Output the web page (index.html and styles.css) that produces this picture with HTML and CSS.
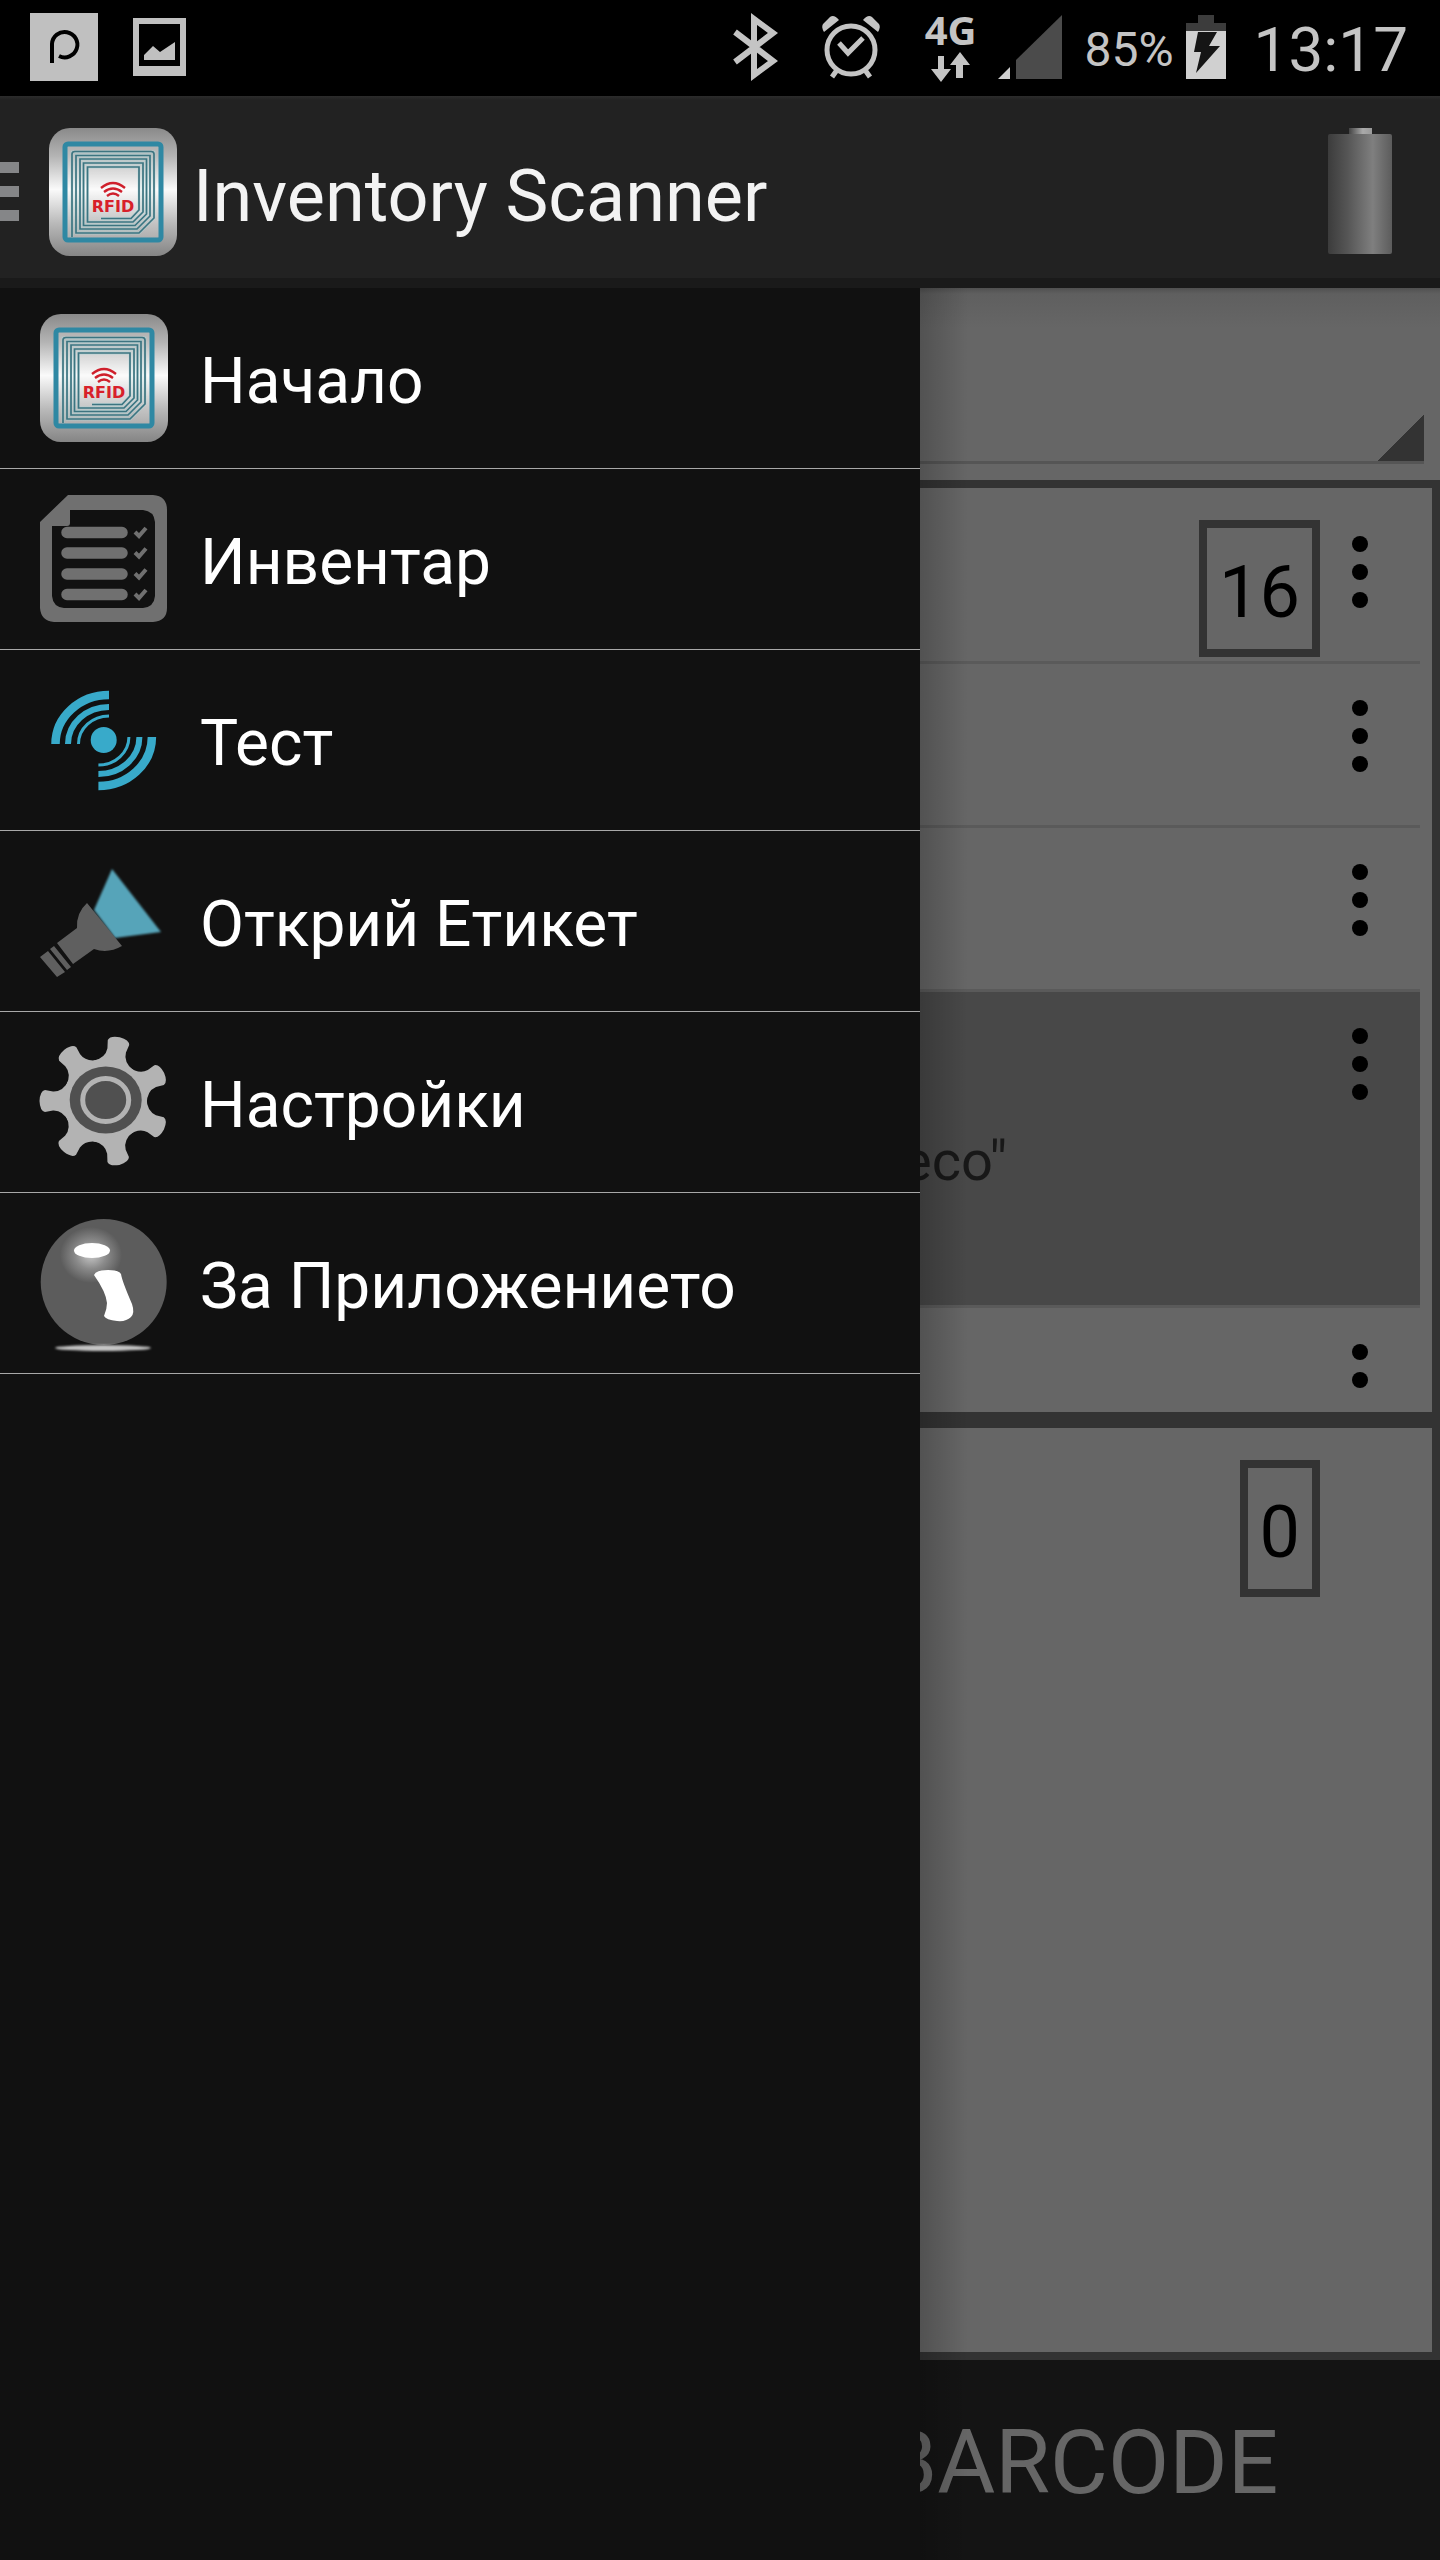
FILE: index.html
```html
<!DOCTYPE html>
<html lang="bg">
<head>
    <meta charset="UTF-8">
    <meta name="viewport" content="width=device-width, initial-scale=1.0">
    <title>Inventory Scanner</title>
    <link rel="stylesheet" href="styles.css">
</head>
<body>
    <!-- shared icons -->
    <svg class="defs" width="0" height="0" aria-hidden="true">
        <defs>
            <linearGradient id="metal" x1="0" y1="0" x2="0" y2="1">
                <stop offset="0" stop-color="#8a8a8a"/>
                <stop offset="0.22" stop-color="#b4b4b4"/>
                <stop offset="0.48" stop-color="#fafafa"/>
                <stop offset="0.75" stop-color="#b8b8b8"/>
                <stop offset="1" stop-color="#858585"/>
            </linearGradient>
            <linearGradient id="cell" x1="0" y1="0" x2="1" y2="0">
                <stop offset="0" stop-color="#3c3c3c"/>
                <stop offset="0.3" stop-color="#555"/>
                <stop offset="0.7" stop-color="#7f7f7f"/>
                <stop offset="1" stop-color="#5c5c5c"/>
            </linearGradient>
            <linearGradient id="cap" x1="0" y1="0" x2="1" y2="0">
                <stop offset="0" stop-color="#444"/>
                <stop offset="0.6" stop-color="#aaa"/>
                <stop offset="1" stop-color="#999"/>
            </linearGradient>
            <radialGradient id="glow">
                <stop offset="0" stop-color="#c8c8c8"/>
                <stop offset="0.5" stop-color="#8a8a8a"/>
                <stop offset="1" stop-color="#5c5c5c"/>
            </radialGradient>
            <filter id="soft" x="-20%" y="-20%" width="140%" height="140%">
                <feGaussianBlur stdDeviation="1.2"/>
            </filter>
            <symbol id="rfid" viewBox="0 0 128 128">
                <rect width="128" height="128" rx="21" fill="url(#metal)"/>
                <rect x="16" y="16" width="96" height="96" rx="3" fill="#fff" fill-opacity="0.15" stroke="#2f88a3" stroke-width="5"/>
                <g fill="none">
                    <path stroke="#a9d6d8" stroke-width="2.8" d="M23 109V24H105V90L90 105H27V27.500H101V88L88 101H31V31H97.500V86L86 97.500H34.500V35H94V84L84 94H38.500V39H90V82L82 90.500H52" opacity="0.55"/>
                    <path stroke="#3d7480" stroke-width="1.700" d="M23 109V26Q23 23.500 26 23.500H102Q105 23.500 105 26V90L90 105H27V27.500H101V88L88 101H31V31H97.500V86L86 97.500H34.500V35H94V84L84 94H38.500V39H90V82L82 90.500H52"/>
                    <path stroke="#cf1f2b" stroke-width="2.300" d="M52 60Q64 50 76 60M55 64Q64 57 73 64M58 68Q64 63 70 68"/>
                </g>
                <text x="64" y="84" text-anchor="middle" class="rfid-text">RFID</text>
            </symbol>
            <path id="tooth" d="M-21-36Q-9-42-9.500-52L-11-60Q-10-65 0-65.500Q10-65 11-60L9.500-52Q9-42 21-36Z"/>
            <symbol id="dots" viewBox="0 0 80 80">
                <circle cx="40" cy="12" r="8"/>
                <circle cx="40" cy="40" r="8"/>
                <circle cx="40" cy="68" r="8"/>
            </symbol>
        </defs>
    </svg>

    <div class="app">
        <!-- status bar -->
        <div class="status">
            <svg width="68" height="68" viewBox="0 0 68 68">
                <rect width="68" height="68" fill="#c0c0c0"/>
                <path d="M22 50V31A12.700 12.700 0 1 1 29 43" fill="none" stroke="#000" stroke-width="4"/>
            </svg>
            <svg class="picture" width="53" height="58" viewBox="0 0 53 58">
                <path d="M0 0H53V58H0ZM6 6V48H47V6Z" fill="#c0c0c0" fill-rule="evenodd"/>
                <path d="M11 42V37L20 28L27 34L42 24V42Z" fill="#c0c0c0"/>
            </svg>
            <div class="status-right">
                <svg width="44" height="66" viewBox="0 0 44 66">
                    <path d="M2 18L40 47L21 61V5L40 19L2 48" fill="none" stroke="#c4c4c4" stroke-width="6"/>
                </svg>
                <svg class="alarm" width="60" height="64" viewBox="0 0 60 64" fill="none" stroke="#c4c4c4">
                    <circle cx="30" cy="35" r="24" stroke-width="5"/>
                    <path d="M18 28L27 38L42 23" stroke-width="5"/>
                    <path d="M3 17Q0 12 2 9L9 2Q13-1 18 5ZM57 17Q60 12 58 9L51 2Q47-1 42 5Z" fill="#c4c4c4" stroke="none"/>
                    <path d="M16 55L11 62M44 55L49 62" stroke-width="5"/>
                </svg>
                <div class="network">
                    <span>4G</span>
                    <svg width="39" height="30" viewBox="0 0 39 30" fill="#c4c4c4">
                        <path d="M7 4H13V17H20L10 30L0 17H7ZM29 0L39 13H32V26H25V13H19Z"/>
                    </svg>
                </div>
                <svg class="signal" width="64" height="64" viewBox="0 0 64 64">
                    <path d="M0 64L12 52V64Z" fill="#d0d0d0"/>
                    <path d="M18 45L64 0V64H18Z" fill="#4b4b4b"/>
                </svg>
                <span class="percent">85%</span>
                <svg class="charge" width="40" height="64" viewBox="0 0 40 64">
                    <path d="M12 0H28V8H40V16H0V8H12Z" fill="#3c3c3c"/>
                    <path d="M0 16H40V64H0Z" fill="#d0d0d0"/>
                    <path d="M12 17H31L23 31H34L10 58L15 37H8Z" fill="#151515"/>
                </svg>
                <span class="clock">13:17</span>
            </div>
        </div>

        <!-- action bar -->
        <header class="bar">
            <button class="home" type="button" aria-label="Меню">
                <svg width="19" height="60" viewBox="0 0 19 60" fill="#858688">
                    <path d="M0 0H19V11H0ZM0 24H19V35H0ZM0 48H19V59H0Z"/>
                </svg>
                <svg width="128" height="128"><use href="#rfid"/></svg>
            </button>
            <h1>Inventory Scanner</h1>
            <svg class="reader" width="64" height="128" viewBox="0 0 64 128">
                <rect x="21" width="23" height="10" fill="url(#cap)"/>
                <rect y="6" width="64" height="120" rx="2" fill="url(#cell)"/>
            </svg>
        </header>

        <div class="body">
            <main class="page">
                <div class="spinner">
                    <select aria-label="Обект"><option></option></select>
                </div>

                <section class="panel">
                    <span class="count">16</span>
                    <ul class="list">
                        <li><button type="button" aria-label="Още"><svg><use href="#dots"/></svg></button></li>
                        <li><button type="button" aria-label="Още"><svg><use href="#dots"/></svg></button></li>
                        <li><button type="button" aria-label="Още"><svg><use href="#dots"/></svg></button></li>
                        <li class="selected">
                            <p>eco"</p>
                            <button type="button" aria-label="Още"><svg><use href="#dots"/></svg></button>
                        </li>
                        <li><button type="button" aria-label="Още"><svg><use href="#dots"/></svg></button></li>
                    </ul>
                </section>

                <section class="panel">
                    <span class="count">0</span>
                </section>

                <footer class="actions">
                    <button type="button">BARCODE</button>
                </footer>
            </main>

            <!-- drawer -->
            <nav class="drawer">
                <a href="#home">
                    <svg width="128" height="128"><use href="#rfid"/></svg>
                    <span>Начало</span>
                </a>
                <a href="#inventory">
                    <svg width="128" height="128" viewBox="0 0 128 128">
                        <path fill="#707070" fill-rule="evenodd" d="M28 0H113Q127 1 127 15V113Q127 126 113 127H14Q1 126 0 113V27ZM30 15V28Q30 31 27 31H12V101Q13 112 24 113H103Q114 112 115 101V27Q114 16 103 15Z"/>
                        <path stroke="#707070" stroke-width="11.500" stroke-linecap="round" d="M27 37.500H82M27 58H82M27 79H82M27 99.500H82"/>
                        <path fill="none" stroke="#707070" stroke-width="4" d="M95 37L99 41L106 33M95 57.500L99 61.500L106 53.500M95 78.500L99 82.500L106 74.500M95 99L99 103L106 95"/>
                    </svg>
                    <span>Инвентар</span>
                </a>
                <a href="#test">
                    <svg width="128" height="128" viewBox="0 0 128 128">
                        <circle cx="63.700" cy="64" r="13" fill="#38aaca"/>
                        <g id="waves" fill="none" stroke="#38aaca">
                            <path stroke-width="8.500" d="M15.500 68A53.500 49 0 0 1 69 19"/>
                            <path stroke-width="6" d="M28 68A41 37 0 0 1 69 31"/>
                            <path stroke-width="3" d="M38.500 68A30.500 28 0 0 1 69 40"/>
                        </g>
                        <use href="#waves" transform="rotate(180 63.700 64.500)"/>
                    </svg>
                    <span>Тест</span>
                </a>
                <a href="#find">
                    <svg width="128" height="128" viewBox="0 0 128 128">
                        <path d="M72 12L121 75L75 81L54 53Z" fill="#56a4b9" filter="url(#soft)"/>
                        <path fill="#5f5f5f" d="M47 46Q36 56 37 71L17 86L33 107L54 92Q68 97 82 89ZM14 89L10 92L27 113L31 110ZM8 94L0 100L17 120L25 115Z"/>
                    </svg>
                    <span>Открий Етикет</span>
                </a>
                <a href="#settings">
                    <svg width="128" height="128" viewBox="0 0 128 128">
                        <g transform="translate(65 63)" fill="#b3b3b3">
                            <circle r="42"/>
                            <use href="#tooth" transform="rotate(13)"/>
                            <use href="#tooth" transform="rotate(64.400)"/>
                            <use href="#tooth" transform="rotate(115.900)"/>
                            <use href="#tooth" transform="rotate(167.300)"/>
                            <use href="#tooth" transform="rotate(218.700)"/>
                            <use href="#tooth" transform="rotate(270.100)"/>
                            <use href="#tooth" transform="rotate(321.600)"/>
                        </g>
                        <ellipse cx="65.700" cy="62" rx="36" ry="33.500" fill="#505050"/>
                        <ellipse cx="65.700" cy="62" rx="23" ry="21.500" fill="#505050" stroke="#b3b3b3" stroke-width="5"/>
                    </svg>
                    <span>Настройки</span>
                </a>
                <a href="#about">
                    <svg width="128" height="128" viewBox="0 0 128 128">
                        <circle cx="63.700" cy="63" r="63" fill="#5c5c5c"/>
                        <ellipse cx="51" cy="36" rx="31" ry="28" fill="url(#glow)"/>
                        <ellipse cx="52" cy="31.500" rx="18" ry="7.500" fill="#fff"/>
                        <path fill="#fff" d="M54 56Q56 51 68 51Q79 51 81 55Q82 62 92 85Q95 94 91 98Q86 103 77 102Q66 101 64 97Q67 90 67 84Q66 73 54 56Z"/>
                        <ellipse cx="63" cy="129" rx="48" ry="3" fill="#c4c4c4" filter="url(#soft)"/>
                    </svg>
                    <span>За Приложението</span>
                </a>
            </nav>
        </div>
    </div>
</body>
</html>
```
FILE: styles.css
```css
* {
    box-sizing: border-box;
}

body {
    margin: 0;
    background: #000;
    font-family: Roboto, "Noto Sans", sans-serif;
}

button, select {
    font: inherit;
    color: inherit;
    background: none;
    border: 0;
    padding: 0;
    margin: 0;
    cursor: pointer;
}

svg {
    display: block;
    flex: none;
    overflow: visible;
}

.defs {
    position: absolute;
}

.rfid-text {
    font: bold 16px "DejaVu Sans", sans-serif;
    fill: #d8202a;
}

.app {
    display: flex;
    flex-direction: column;
    min-height: 100vh;
}

/* status bar */
.status {
    display: flex;
    align-items: center;
    height: 96px;
    padding: 0 32px 2px 30px;
    color: #c4c4c4;
}

.picture {
    margin-left: 35px;
}

.status-right {
    display: flex;
    align-items: center;
    margin-left: auto;
}

.alarm, .network {
    margin-left: 44px;
}

.network {
    display: flex;
    flex-direction: column;
    align-items: center;
    gap: 4px;
    font: bold 40px/36px "Noto Sans", sans-serif;
}

.signal, .percent {
    margin-left: 22px;
}

.percent {
    padding-top: 4px;
    font-size: 48px;
}

.charge {
    margin-left: 12px;
}

.clock {
    padding-top: 4px;
    margin-left: 28px;
    font-size: 62px;
}

/* action bar */
.bar {
    display: flex;
    align-items: center;
    height: 192px;
    padding-right: 48px;
    background: linear-gradient(#2c2c2c, #222 4px, #222 182px, #1a1a1a 182px);
    color: #f3f3f3;
}

.home {
    display: flex;
    align-items: center;
    gap: 30px;
}

.bar h1 {
    margin: 0;
    padding: 8px 0 0 16px;
    font-size: 72px;
    font-weight: 400;
}

.reader {
    margin-left: auto;
}

/* content under the drawer */
.body {
    position: relative;
    display: flex;
    flex: 1;
}

.page {
    display: flex;
    flex-direction: column;
    flex: 1;
    background: #666;
    color: #000;
}

.spinner {
    height: 192px;
    padding: 0 16px 16px;
    background: linear-gradient(#505050, #5f5f5f 6px, #666 40px);
}

.spinner select {
    appearance: none;
    display: block;
    width: 100%;
    height: 100%;
    border-bottom: 3px solid #555;
    background: linear-gradient(135deg, transparent 50%, #333 50%) right bottom / 48px 50px no-repeat;
    background-origin: border-box;
    background-clip: border-box;
}

.panel {
    position: relative;
    flex: 1;
    min-height: 0;
    padding: 12px;
    border: 8px solid #333;
}

.list {
    height: 100%;
    max-height: 900px;
    margin: 0;
    padding: 0;
    overflow: hidden;
    list-style: none;
}

.list li {
    display: flex;
    align-items: flex-start;
    justify-content: flex-end;
    min-height: 164px;
    padding: 32px 20px 0 0;
    border-bottom: 3px solid #5a5a5a;
}

.list li.selected {
    justify-content: space-between;
    min-height: 316px;
    padding-left: 63%;
    background: #484848;
}

.list p {
    margin: 0;
    padding-top: 104px;
    color: #181818;
    font-size: 56px;
    line-height: 66px;
}

.list button, .list svg {
    width: 80px;
    height: 80px;
}

.count {
    position: absolute;
    top: 32px;
    right: 112px;
    padding: 16px 12px 8px;
    border: 8px solid #333;
    font-size: 72px;
    line-height: 97px;
}

.actions {
    display: grid;
    grid-template-columns: 1fr 1fr;
    height: 200px;
    background: #141414;
    color: #666;
    font-size: 89px;
}

.actions button {
    grid-column: 2;
    padding-top: 4px;
}

/* drawer */
.drawer {
    position: absolute;
    top: 0;
    bottom: 0;
    left: 0;
    width: min(920px, 64%);
    background: #111;
}

.drawer::after {
    content: "";
    position: absolute;
    top: 0;
    bottom: 0;
    left: 100%;
    width: 48px;
    background: linear-gradient(to right, rgba(0, 0, 0, 0.2), transparent);
}

.drawer a {
    display: flex;
    align-items: center;
    gap: 32px;
    height: 181px;
    padding-left: 40px;
    border-bottom: 1px solid #a8a8a8;
    color: #fff;
    font-size: 64px;
    text-decoration: none;
}

.drawer span {
    padding-top: 6px;
}
```
